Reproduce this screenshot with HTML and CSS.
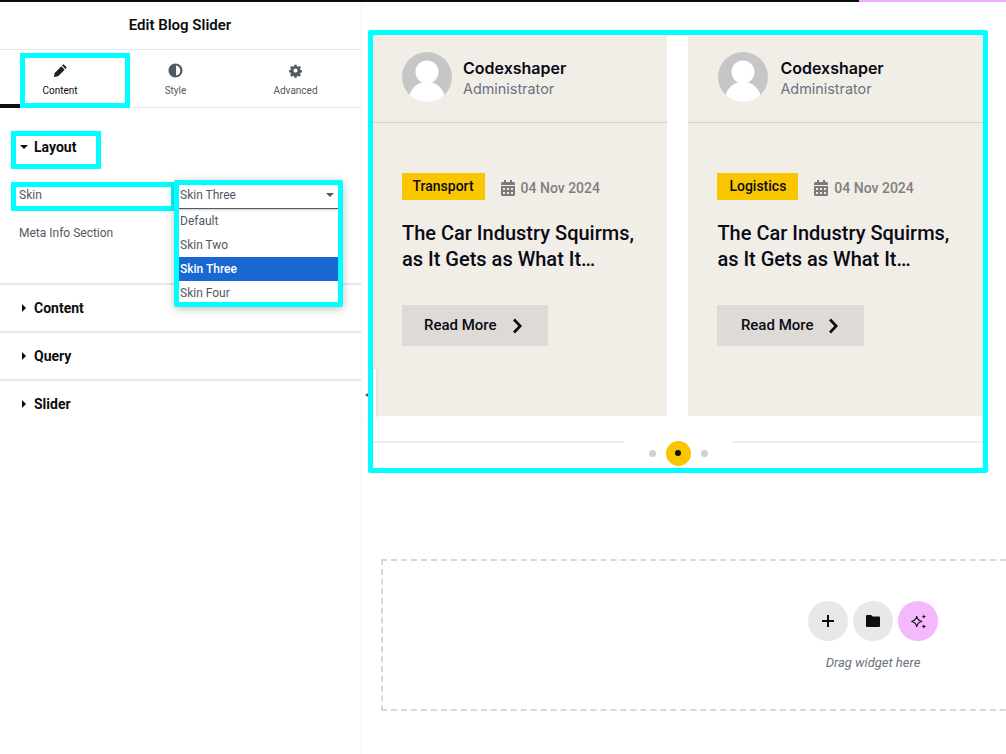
FILE: index.html
```html
<!DOCTYPE html>
<html lang="en">
<head>
    <meta charset="UTF-8">
    <title>Edit Blog Slider</title>
    <link rel="stylesheet" href="styles.css">
</head>
<body>
<div class="topbar">
    <div class="topbar-dark"></div>
    <div class="topbar-pink"></div>
</div>
<div class="app">
    <div class="panel">
        <div class="panel-head">Edit Blog Slider</div>
        <div class="tabs">
            <div class="tab-mark"></div>
            <div class="tab tab-content">
                <svg class="tab-icon" viewBox="0 0 16 16"><path d="M11.200 1.200 14.800 4.800 13.300 6.300 9.700 2.700ZM8.900 3.500 12.500 7.100 5.400 14.200 1 15 1.800 10.600Z" fill="#1f2124"/></svg>
                <span>Content</span>
            </div>
            <div class="tab tab-style">
                <svg class="tab-icon" viewBox="0 0 16 16"><path fill-rule="evenodd" d="M8 .5a7.500 7.500 0 1 0 0 15 7.500 7.500 0 0 0 0-15ZM8.600 2.600a5.500 5.500 0 0 1 0 10.800Z" fill="#515962"/></svg>
                <span>Style</span>
            </div>
            <div class="tab tab-advanced">
                <svg class="tab-icon" viewBox="0 0 16 16"><path fill-rule="evenodd" d="M6.600.8h2.800l.4 2 1.300.6 1.800-1.100 2 2-1.200 1.800.6 1.300 2 .4v2.600l-2 .5-.6 1.300 1.200 1.700-2 2-1.800-1.100-1.300.5-.4 2H6.600l-.4-2-1.300-.5-1.800 1.100-2-2 1.200-1.700-.6-1.300-2-.5V7.800l2-.4.6-1.300-1.200-1.800 2-2 1.800 1.100 1.300-.6ZM8 5.600a2.600 2.600 0 1 0 0 5.200 2.600 2.600 0 0 0 0-5.200Z" fill="#515962" transform="translate(1.300 1.200) scale(.84)"/></svg>
                <span>Advanced</span>
            </div>
        </div>

        <div class="layout-section">
            <div class="layout-title"><span class="arrow-down"></span>Layout</div>
            <div class="skin-row">
                <div class="skin-label">Skin</div>
                <div class="skin-select">
                    <div class="select-value">Skin Three<span class="select-caret"></span></div>
                    <div class="select-option">Default</div>
                    <div class="select-option">Skin Two</div>
                    <div class="select-option selected">Skin Three</div>
                    <div class="select-option">Skin Four</div>
                </div>
            </div>
            <div class="meta-label">Meta Info Section</div>
        </div>

        <div class="section"><span class="arrow-right"></span>Content</div>
        <div class="section"><span class="arrow-right"></span>Query</div>
        <div class="section"><span class="arrow-right"></span>Slider</div>
    </div>

    <div class="main">
        <div class="panel-toggle"><span class="toggle-arrow"></span></div>

        <div class="slider">
            <div class="cards">
                <div class="card">
                    <div class="card-author">
                        <svg class="avatar" viewBox="0 0 50 50"><circle cx="25" cy="25" r="25" fill="#c6c6c6"/><circle cx="25" cy="20" r="11.500" fill="#fff"/><path d="M7.500 43C10 34.500 17 30 25 30s15 4.500 17.500 13A25 25 0 0 1 25 50 25 25 0 0 1 7.500 43Z" fill="#fff"/></svg>
                        <div class="author-text">
                            <div class="author-name">Codexshaper</div>
                            <div class="author-role">Administrator</div>
                        </div>
                    </div>
                    <div class="card-body">
                        <div class="card-meta">
                            <span class="tag">Transport</span>
                            <svg class="cal" viewBox="0 0 14 16"><path fill-rule="evenodd" d="M3 0h2v2h4V0h2v2h1.500A1.500 1.500 0 0 1 14 3.500V5H0V3.500A1.500 1.500 0 0 1 1.500 2H3ZM0 6h14v8.500a1.500 1.500 0 0 1-1.500 1.500h-11A1.500 1.500 0 0 1 0 14.500ZM2 8v2h2V8Zm4 0v2h2V8Zm4 0v2h2V8ZM2 12v2h2v-2Zm4 0v2h2v-2Zm4 0v2h2v-2Z" fill="#7a7a7a"/></svg>
                            <span class="date">04 Nov 2024</span>
                        </div>
                        <div class="card-title">The Car Industry Squirms,<br>as It Gets as What It…</div>
                        <div class="read-more">Read More
                            <svg class="chevron" viewBox="0 0 10 16"><path d="M2 1.500 8.200 8 2 14.500" fill="none" stroke="#0b0b14" stroke-width="2.600"/></svg>
                        </div>
                    </div>
                </div>
                <div class="card">
                    <div class="card-author">
                        <svg class="avatar" viewBox="0 0 50 50"><circle cx="25" cy="25" r="25" fill="#c6c6c6"/><circle cx="25" cy="20" r="11.500" fill="#fff"/><path d="M7.500 43C10 34.500 17 30 25 30s15 4.500 17.500 13A25 25 0 0 1 25 50 25 25 0 0 1 7.500 43Z" fill="#fff"/></svg>
                        <div class="author-text">
                            <div class="author-name">Codexshaper</div>
                            <div class="author-role">Administrator</div>
                        </div>
                    </div>
                    <div class="card-body">
                        <div class="card-meta">
                            <span class="tag">Logistics</span>
                            <svg class="cal" viewBox="0 0 14 16"><path fill-rule="evenodd" d="M3 0h2v2h4V0h2v2h1.500A1.500 1.500 0 0 1 14 3.500V5H0V3.500A1.500 1.500 0 0 1 1.500 2H3ZM0 6h14v8.500a1.500 1.500 0 0 1-1.500 1.500h-11A1.500 1.500 0 0 1 0 14.500ZM2 8v2h2V8Zm4 0v2h2V8Zm4 0v2h2V8ZM2 12v2h2v-2Zm4 0v2h2v-2Zm4 0v2h2v-2Z" fill="#7a7a7a"/></svg>
                            <span class="date">04 Nov 2024</span>
                        </div>
                        <div class="card-title">The Car Industry Squirms,<br>as It Gets as What It…</div>
                        <div class="read-more">Read More
                            <svg class="chevron" viewBox="0 0 10 16"><path d="M2 1.500 8.200 8 2 14.500" fill="none" stroke="#0b0b14" stroke-width="2.600"/></svg>
                        </div>
                    </div>
                </div>
            </div>
            <div class="slider-nav">
                <span class="dot"></span>
                <span class="dot-active"></span>
                <span class="dot"></span>
            </div>
        </div>

        <div class="dropzone">
            <div class="drop-buttons">
                <div class="drop-btn">
                    <svg class="drop-icon" viewBox="0 0 16 16"><path d="M8 2v12M2 8h12" fill="none" stroke="#0c0d0e" stroke-width="2"/></svg>
                </div>
                <div class="drop-btn">
                    <svg class="drop-icon" viewBox="0 0 16 16"><path d="M2.200 2h3.900l1.500 1.600h6.200c.7 0 1.200.5 1.200 1.200v7.900c0 .7-.5 1.300-1.200 1.300H2.200c-.7 0-1.200-.6-1.200-1.300V3.200C1 2.500 1.500 2 2.200 2Z" fill="#0c0d0e"/></svg>
                </div>
                <div class="drop-btn drop-btn-ai">
                    <svg class="drop-icon-ai" viewBox="0 0 16 16"><path d="M6.500 3.500C7 6.500 8 7.500 11 8 8 8.500 7 9.500 6.500 12.500 6 9.500 5 8.500 2 8 5 7.500 6 6.500 6.500 3.500Z" fill="none" stroke="#0c0d0e" stroke-width=".9"/><path d="M12.500 1.800c.2 1.300.7 1.800 2 2-1.300.2-1.800.7-2 2-.2-1.300-.7-1.800-2-2 1.300-.2 1.800-.7 2-2ZM12.500 10.200c.2 1.300.7 1.800 2 2-1.300.2-1.800.7-2 2-.2-1.300-.7-1.800-2-2 1.300-.2 1.800-.7 2-2Z" fill="#0c0d0e"/></svg>
                </div>
            </div>
            <div class="drop-text">Drag widget here</div>
        </div>
    </div>
</div>
</body>
</html>
```

FILE: styles.css
```css
* {
    box-sizing: border-box;
}

html, body {
    height: 100%;
    margin: 0;
    overflow: hidden;
}

body {
    font-family: Roboto, "Liberation Sans", sans-serif;
    background: #fff;
    color: #0c0d0e;
}

.topbar {
    display: flex;
    height: 2px;
}

.topbar-dark {
    width: 859px;
    background: #0c0d0e;
}

.topbar-pink {
    flex: 1;
    background: #f0abfc;
}

.app {
    display: flex;
    height: 752px;
}

/* left panel */
.panel {
    width: 362px;
    flex-shrink: 0;
    border-right: 1px solid #f1f2f3;
}

.panel-head {
    height: 48px;
    line-height: 46px;
    padding-right: 1px;
    text-align: center;
    font-size: 15px;
    font-weight: 600;
    border-bottom: 1px solid #e6e8ea;
}

.tabs {
    display: flex;
    align-items: flex-end;
    height: 58px;
    border-bottom: 1px solid #e6e8ea;
}

.tab-mark {
    width: 20px;
    height: 4px;
    background: #0c0d0e;
    margin-bottom: -1px;
}

.tab {
    display: flex;
    flex-direction: column;
    align-items: center;
    font-size: 10px;
    color: #515962;
}

.tab-icon {
    width: 15px;
    height: 15px;
    margin-bottom: 7px;
}

.tab-content {
    width: 110px;
    height: 55px;
    margin-bottom: -1px;
    padding: 5px 30px 0 0;
    border: 5px solid #00ffff;
    color: #0c0d0e;
}

.tab-style {
    width: 100px;
    height: 49px;
    padding: 6px 9px 0 0;
    margin-bottom: 1px;
}

.tab-advanced {
    width: 131px;
    height: 49px;
    padding-top: 6px;
    margin-bottom: 1px;
}

.layout-section {
    height: 177px;
    padding: 23px 0 0 11px;
    border-bottom: 2px solid #e6e8ea;
}

.layout-title {
    display: flex;
    align-items: center;
    width: 90px;
    height: 38px;
    padding: 0 0 7px 4px;
    border: 5px solid #00ffff;
    font-size: 14px;
    font-weight: 700;
}

.arrow-down {
    width: 0;
    height: 0;
    margin-right: 6px;
    border-left: 4px solid transparent;
    border-right: 4px solid transparent;
    border-top: 4px solid #0c0d0e;
}

.arrow-right {
    width: 0;
    height: 0;
    margin: 0 8px 0 22px;
    border-top: 4px solid transparent;
    border-bottom: 4px solid transparent;
    border-left: 4px solid #0c0d0e;
}

.skin-row {
    position: relative;
    margin-top: 13px;
}

.skin-label {
    width: 165px;
    height: 29px;
    line-height: 17px;
    padding-left: 3px;
    border: 5px solid #00ffff;
    font-size: 12px;
    color: #515962;
}

.skin-select {
    position: absolute;
    left: 163px;
    top: -2px;
    width: 169px;
    height: 127px;
    overflow: hidden;
    background: #fff;
    border: 5px solid #00ffff;
    border-radius: 2px;
    box-shadow: 0 2px 8px rgba(0, 0, 0, .25);
    font-size: 12px;
    color: #515962;
    z-index: 2;
}

.select-value {
    display: flex;
    justify-content: space-between;
    align-items: center;
    height: 24px;
    padding: 0 4px 4px 1px;
    border-bottom: 1px solid #515962;
    box-shadow: 0 1px 2px rgba(0, 0, 0, .2);
}

.select-caret {
    width: 0;
    height: 0;
    border-left: 4px solid transparent;
    border-right: 4px solid transparent;
    border-top: 4px solid #515962;
}

.select-option {
    height: 24px;
    line-height: 24px;
    padding-left: 1px;
}

.select-option.selected {
    background: #1a67d2;
    color: #fff;
    font-weight: 500;
}

.meta-label {
    margin: 15px 0 0 8px;
    font-size: 12px;
    color: #515962;
}

.section {
    display: flex;
    align-items: center;
    height: 48px;
    border-bottom: 2px solid #e6e8ea;
    font-size: 14px;
    font-weight: 700;
}

.section:last-child {
    height: 46px;
    border-bottom: 0;
}

/* right side */
.main {
    position: relative;
    flex: 1;
    min-width: 0;
    overflow: hidden;
    padding: 28px 0 0 6px;
}

.panel-toggle {
    position: absolute;
    left: 0;
    top: 367px;
    width: 14px;
    height: 50px;
    background: #fff;
    box-shadow: 1px 0 3px rgba(0, 0, 0, .08);
    z-index: 1;
}

.toggle-arrow {
    position: absolute;
    left: 3px;
    top: 24px;
    width: 0;
    height: 0;
    border-top: 2px solid transparent;
    border-bottom: 2px solid transparent;
    border-right: 3px solid #515962;
}

.slider {
    position: relative;
    width: 620px;
    height: 443px;
    padding: 5px;
}

/* the marker frame goes over the toggle tab */
.slider::after {
    content: "";
    position: absolute;
    top: 0;
    right: 0;
    bottom: 0;
    left: 0;
    border: 5px solid #00ffff;
    border-radius: 2px;
    z-index: 2;
}

.cards {
    display: flex;
    gap: 21px;
}

.card {
    width: 294.400px;
    flex-shrink: 0;
    height: 381px;
    background: #f1eee8;
}

.card + .card {
    flex: 1;
}

.card-author {
    display: flex;
    align-items: center;
    gap: 11px;
    height: 88px;
    padding: 0 0 4px 29px;
    border-bottom: 1px solid #d6d3cd;
}

.card + .card .card-author {
    gap: 12px;
    padding-left: 30px;
}

.avatar {
    width: 50px;
    height: 50px;
}

.author-text {
    margin-top: 3px;
}

.author-name {
    font-family: Inter, "Liberation Sans", sans-serif;
    font-size: 16px;
    font-weight: 600;
    line-height: 21px;
    color: #0a0a14;
}

.author-role {
    font-family: Inter, "Liberation Sans", sans-serif;
    font-size: 14.400px;
    line-height: 20px;
    color: #6b7280;
}

.card-body {
    padding: 50px 0 0 29px;
}

.card-meta {
    display: flex;
    align-items: center;
}

.tag {
    height: 27px;
    line-height: 26px;
    padding: 0 11px 0 10.500px;
    background: #f9c600;
    font-size: 14px;
    font-weight: 500;
    color: #0a0a14;
}

.card + .card .tag {
    padding: 0 12px;
}

.cal {
    width: 14px;
    height: 16px;
    margin: 2px 6px 0 16px;
}

.date {
    font-size: 14px;
    font-weight: 500;
    color: #808080;
    margin-top: 2px;
}

.card-title {
    margin-top: 20px;
    font-size: 20px;
    font-weight: 500;
    line-height: 26px;
    color: #0a0a14;
}

.read-more {
    display: inline-flex;
    align-items: center;
    gap: 15px;
    height: 41px;
    margin-top: 33px;
    padding: 0 26px 2px 22px;
    background: #dedbd6;
    font-size: 15px;
    font-weight: 500;
    color: #0a0a14;
}

.card + .card .read-more {
    padding-left: 23.500px;
    padding-right: 25.500px;
}

.chevron {
    width: 10px;
    height: 16px;
    margin-top: 2px;
}

.slider-nav {
    display: flex;
    justify-content: center;
    align-items: center;
    gap: 10px;
    height: 22px;
    margin-top: 25px;
    padding-top: 2px;
    background:
        linear-gradient(#eeeeee, #eeeeee) left top / 251px 2px no-repeat,
        linear-gradient(#eeeeee, #eeeeee) right top / 251px 2px no-repeat;
}

.dot {
    width: 7px;
    height: 7px;
    border-radius: 50%;
    background: #d0d0d0;
}

.dot-active {
    display: flex;
    align-items: center;
    justify-content: center;
    width: 25px;
    height: 25px;
    border-radius: 50%;
    background: #f9c600;
}

.dot-active::after {
    content: "";
    width: 6px;
    height: 6px;
    border-radius: 50%;
    background: #111;
}

.dropzone {
    display: flex;
    flex-direction: column;
    align-items: center;
    width: 984px;
    height: 152px;
    margin: 86px 0 0 13px;
    padding-top: 40px;
    border: 2px dashed #d5d8dc;
}

.drop-buttons {
    display: flex;
    gap: 5px;
}

.drop-btn {
    display: flex;
    align-items: center;
    justify-content: center;
    width: 40px;
    height: 40px;
    border-radius: 50%;
    background: #e6e8ea;
}

.drop-btn-ai {
    background: #f3b9fc;
}

.drop-icon {
    width: 16px;
    height: 16px;
}

.drop-icon-ai {
    width: 19px;
    height: 19px;
}

.drop-text {
    margin-top: 14px;
    font-size: 13px;
    font-style: italic;
    color: #69727d;
}
```
